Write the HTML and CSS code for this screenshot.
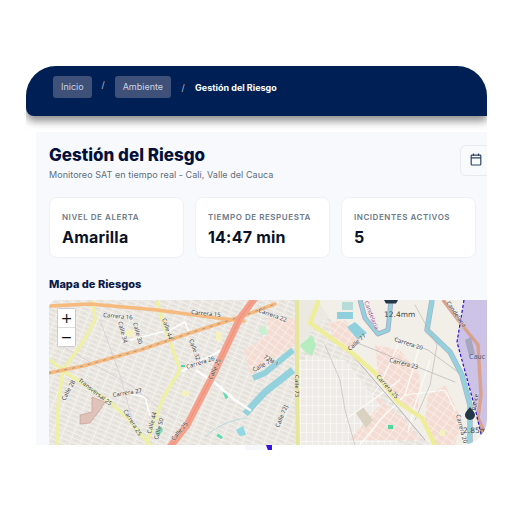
FILE: index.html
```html
<!DOCTYPE html>
<html lang="es">
<head>
<meta charset="utf-8">
<title>Gestión del Riesgo</title>
<meta name="viewport" content="width=device-width, initial-scale=1.0">
<link rel="stylesheet" href="styles.css">
</head>
<body>

<div class="frame">
  <nav class="topbar">
    <a class="crumb">Inicio</a>
    <span class="sep sep-high">/</span>
    <a class="crumb">Ambiente</a>
    <span class="sep">/</span>
    <span class="crumb-now">Gestión del Riesgo</span>
  </nav>

  <main class="panel">
    <div class="panel-head">
      <div>
        <h1 class="title">Gestión del Riesgo</h1>
        <p class="subtitle">Monitoreo SAT en tiempo real - Cali, Valle del Cauca</p>
      </div>
      <button class="date-btn" aria-label="Fecha">
        <svg width="12" height="13" viewBox="0 0 12 13" fill="none" stroke="#2c4560" stroke-width="1.2">
          <rect x="1.2" y="2.2" width="9.6" height="9.8" rx="0.8"/>
          <path d="M1.2 4.8h9.6M3.5 0.6v2.4M8.5 0.6v2.4"/>
        </svg>
      </button>
    </div>

    <div class="cards">
      <div class="card">
        <div class="card-label">Nivel de alerta</div>
        <div class="card-value">Amarilla</div>
      </div>
      <div class="card">
        <div class="card-label">Tiempo de respuesta</div>
        <div class="card-value">14:47 min</div>
      </div>
      <div class="card">
        <div class="card-label">Incidentes activos</div>
        <div class="card-value">5</div>
      </div>
    </div>

    <h2 class="map-title">Mapa de Riesgos</h2>

    <div class="map">
      <svg class="map-art" width="454" height="145" viewBox="49 300 454 145">
        <defs>
          <filter id="soft"><feGaussianBlur stdDeviation="0.35"/></filter>
          <pattern id="blocks-a" width="10" height="4.500" patternUnits="userSpaceOnUse" patternTransform="rotate(22)">
            <rect width="10" height="4.500" fill="#e8e4de"/>
            <path d="M0 0.4h10M0.4 0v4.500" stroke="#f7f5f2" stroke-width="0.8"/>
            <path d="M4 2.300h3" stroke="#dcd4d4" stroke-width="0.6"/>
          </pattern>
          <pattern id="blocks-b" width="6" height="9" patternUnits="userSpaceOnUse">
            <rect width="6" height="9" fill="#efecE7"/>
            <path d="M0.4 0v9M0 0.4h6" stroke="#fbfaf8" stroke-width="0.7"/>
          </pattern>
          <pattern id="blocks-pink" width="8" height="6" patternUnits="userSpaceOnUse" patternTransform="rotate(35)">
            <rect width="8" height="6" fill="#f4dcd3"/>
            <path d="M0 0.4h8M0.4 0v6" stroke="#f9f1ed" stroke-width="0.8"/>
          </pattern>
        </defs>

        <g filter="url(#soft)">
          <rect x="49" y="300" width="454" height="145" fill="url(#blocks-a)"/>
          <polygon points="298,300 345,300 312,330 300,345 298,445" fill="#ece8e2"/>
          <polygon points="298,360 345,360 400,445 298,445" fill="url(#blocks-b)"/>
          <polygon points="318,300 503,300 503,445 430,445 352,353" fill="#f2efe9"/>
          <polygon points="328,323 345,320 362,340 350,352 335,340" fill="url(#blocks-pink)"/>
          <polygon points="375,345 400,350 420,375 418,410 398,402 378,373" fill="url(#blocks-pink)"/>
          <polygon points="348,412 375,395 405,420 420,440 350,440" fill="url(#blocks-pink)"/>
          <polygon points="305,355 345,360 380,405 345,445 305,445" fill="url(#blocks-b)"/>
          <polygon points="244,350 268,335 268,362 250,376" fill="url(#blocks-pink)"/>
          <polygon points="268,318 295,318 295,345 268,362" fill="url(#blocks-pink)"/>
          <polygon points="428,395 445,385 462,420 455,445 436,445 425,420" fill="url(#blocks-pink)"/>

          <!-- parks -->
          <polygon points="300,345 312,335 316,345 312,356 305,352" fill="#b5edc0"/>
          <polygon points="259,328 265,326 268,333 261,336" fill="#c8f0d0"/>
          <polygon points="155,432 160,426 163,430 158,438" fill="#5fdcb0"/>
          <rect x="181" y="365" width="4" height="2" fill="#4fd8b0"/>
          <rect x="224" y="392" width="3" height="7" fill="#5fdcb0" transform="rotate(-20 225 395)"/>
          <rect x="217" y="435" width="6" height="3" fill="#5fdcb0" transform="rotate(35 220 436)"/>
          <rect x="388" y="425" width="5" height="4" fill="#4fd8a0"/>
          <rect x="125" y="330" width="9" height="7" fill="#f6f2c0"/>
          <rect x="216" y="332" width="6" height="9" fill="#f6f2c0"/>
          <rect x="182" y="391" width="7" height="5" fill="#f6f2c0"/>
          <rect x="440" y="430" width="5" height="6" fill="#f6f2c0"/>
          <polygon points="80,415 92,412 92,397 105,402 100,410 90,423 80,424" fill="#dfc3ba" stroke="#c8948a" stroke-width="0.6"/>
          <polygon points="355,412 363,407 373,420 366,428" fill="#d9d2c0"/>

          <!-- water -->
          <g fill="none" stroke-linejoin="round">
            <polyline points="360,300 365,318 378,334 388,330 391,300" stroke="#a9a6c4" stroke-width="5"/>
            <polyline points="360,300 365,318 378,334 388,330 391,300" stroke="#93d2dd" stroke-width="3.500"/>
            <polyline points="432,300 427,330 450,352 462,375 470,405 470,445" stroke="#a9b6c8" stroke-width="5.500"/>
            <polyline points="432,300 427,330 450,352 462,375 470,405 470,445" stroke="#93d2dd" stroke-width="4"/>
            <polyline points="253,378 265,373 293,350" stroke="#93d2dd" stroke-width="6"/>
            <polyline points="245,414 253,405 265,392 293,370" stroke="#93d2dd" stroke-width="7"/>
            <path d="M205 437 C218 425 232 420 246 418" stroke-width="0.8" stroke="#a9d8e0"/>
          </g>
          <polygon points="337,312 353,312 353,319 337,319" fill="#90d0de"/>
          <polygon points="347,327 355,322 367,333 358,340" fill="#90d0de"/>
          <polygon points="342,302 353,302 353,310 342,310" fill="#b5dcd8"/>
          <polygon points="236,430 243,426 246,435 240,436 237,432" fill="#8fd8e4"/>

          <!-- purple zone -->
          <polygon points="464,300 457,342 475,408 482,438 503,438 503,300" fill="#cdc3e6"/>
          <polyline points="443,300 462,325 478,345 481,395 478,418 486,436" fill="none" stroke="#d8a28e" stroke-width="3.500"/>
          <polygon points="465,340 471,337 475,354 469,356" fill="#a6a7bf"/>

          <!-- roads -->
          <g fill="none" stroke-linecap="round" stroke-linejoin="round">
            <polyline points="197,371 215,383 235,400 250,410" stroke="#fdfdfd" stroke-width="2.500"/>
            <polyline points="182,371 207,358 222,350" stroke="#fdfdfd" stroke-width="2.500"/>
            <polyline points="130,340 170,330 185,322 190,335" stroke="#fdfdfd" stroke-width="1.800"/>
            <polyline points="127,393 145,397 150,415" stroke="#fdfdfd" stroke-width="1.500"/>
            <polyline points="420,345 405,395 380,420 360,445" stroke="#fbfbf8" stroke-width="1.400"/>
            <polyline points="398,345 380,385 372,395" stroke="#fbfbf8" stroke-width="1.200"/>
            <polyline points="430,360 415,405 408,432" stroke="#fbfbf8" stroke-width="1.200"/>
            <polyline points="405,395 445,390 455,410" stroke="#fbfbf8" stroke-width="1.200"/>
            <polyline points="345,420 400,380" stroke="#fbfbf8" stroke-width="1.200"/>
            <polyline points="325,345 340,380 345,410 355,445" stroke="#c7c1c6" stroke-width="0.8"/>
            <polyline points="355,342 420,368 455,382" stroke="#a9a9a9" stroke-width="0.6"/>
            <polyline points="395,338 428,350 458,372" stroke="#a9a9a9" stroke-width="0.6"/>
            <polyline points="415,305 437,345 430,385 415,420" stroke="#b6b2ac" stroke-width="0.6"/>
            <polyline points="322,330 355,358 400,410 425,440" stroke="#b9b2ba" stroke-width="1"/>
            <polyline points="60,345 95,365 130,385 175,420" stroke="#d9ccd4" stroke-width="0.8"/>
            <polyline points="100,320 120,375 135,430" stroke="#d9ccd4" stroke-width="0.8"/>
            <polyline points="93,302 95,320 83,342 63,370 58,405 57,445" stroke="#eef0a6" stroke-width="3.500"/>
            <polyline points="49,359 65,372 110,402 127,418 150,445" stroke="#eef0a6" stroke-width="3.500"/>
            <polyline points="157,302 163,322 180,370 163,398 147,442" stroke="#eef0a6" stroke-width="3.500"/>
            <polyline points="297,300 297,395 298,445" stroke="#e6e69a" stroke-width="4"/>
            <polyline points="318,302 310,323 352,353 375,373 398,402 422,418 435,445" stroke="#eeee98" stroke-width="4.500"/>
            <polyline points="50,306 90,304 157,310 217,318 244,321" stroke="#f6b97e" stroke-width="3.500"/>
            <polyline points="49,373 83,366 140,350 190,333 240,317 275,304" stroke="#f6b97e" stroke-width="3.500"/>
            <polyline points="49,373 83,366 140,350 190,333 240,317 275,304" stroke="#7f8a95" stroke-width="0.7" stroke-dasharray="2 6"/>
            <polyline points="255,298 240,318 213,375 187,425 170,447" stroke="#f5a08a" stroke-width="7"/>
            <polyline points="255,298 240,318 213,375 187,425 170,447" stroke="#e88a78" stroke-width="0.8"/>
          </g>
        </g>

        <polyline points="464,300 457,342 475,408 482,438" fill="none" stroke="#2410d0" stroke-width="1.200" stroke-dasharray="3 2"/>

        <!-- street names -->
        <g class="street">
          <text transform="translate(103 317) rotate(5)">Carrera 16</text>
          <text transform="translate(118 322) rotate(75)">Calle 34</text>
          <text transform="translate(133 323) rotate(75)">Calle 30</text>
          <text transform="translate(162 319) rotate(72)">Calle 44</text>
          <text transform="translate(189 340) rotate(70)">Calle 32</text>
          <text transform="translate(187 369) rotate(-18)">Carrera 26</text>
          <text transform="translate(212 380) rotate(-66)">Calle 25</text>
          <text transform="translate(191 314) rotate(6)">Carrera 15</text>
          <text transform="translate(78 381) rotate(38)">Transversal 25</text>
          <text transform="translate(65 401) rotate(-62)">Calle 28</text>
          <text transform="translate(113 397) rotate(-9)">Carrera 27</text>
          <text transform="translate(123 411) rotate(58)">Carrera 25</text>
          <text transform="translate(151 434) rotate(-75)">Calle 44</text>
          <text transform="translate(158 440) rotate(-75)">Calle 50</text>
          <text transform="translate(174 441) rotate(-50)">Calle 25</text>
          <text transform="translate(254 372) rotate(-28)">Calle 72</text>
          <text transform="translate(258 312) rotate(20)">Carrera 22</text>
          <text transform="translate(263 358) rotate(30)">72H 1</text>
          <text transform="translate(295 375) rotate(90)">Calle 73</text>
          <text transform="translate(279 428) rotate(-68)">Calle 72J</text>
          <text transform="translate(350 351) rotate(-42)">Calle 77</text>
          <text transform="translate(394 341) rotate(18)">Carrera 20</text>
          <text transform="translate(389 362) rotate(14)">Carrera 23</text>
          <text transform="translate(376 377) rotate(48)">Carrera 25</text>
          <text transform="translate(456 415) rotate(75)">Carrera 20</text>
          <text transform="translate(446 303) rotate(55)">Candelaria</text>
          <text transform="translate(476 411) rotate(-82)">Pance</text>
          <text class="street-purple" transform="translate(364 302) rotate(68)">Candelaria</text>
          <text class="street-big" x="469" y="359">Cauc</text>
        </g>

        <!-- sensors -->
        <path d="M384 300h14l-2 3.500h-10z" fill="#243746"/>
        <text class="reading" x="384" y="317">12.4mm</text>
        <path d="M470 407 C472 410 475 412 475 415 A5 5 0 0 1 465 415 C465 412 468 410 470 407z" fill="#243746"/>
        <text class="reading" x="463" y="433">2.85m</text>
      </svg>

      <div class="zoom-box">
        <button class="zoom-btn">+</button>
        <button class="zoom-btn">−</button>
      </div>
    </div>
  </main>
</div>

<div class="tail">
  <div class="tail-pale"></div>
  <div class="tail-blue"></div>
</div>

</body>
</html>
```

FILE: styles.css
```css
* {box-sizing: border-box;}

body {
  margin: 0;
  background-color: #fff;
  font-family: Inter, "Liberation Sans", sans-serif;
}

.frame {
  width: 461px;
  height: 379px;
  margin: 66px 0 0 26px;
  background-color: #fff;
  border-radius: 30px 30px 26px 0;
  overflow: hidden;
}

.topbar {
  display: flex;
  align-items: center;
  height: 50px;
  padding: 0 27px 8px;
  background-color: #001f54;
  border-radius: 0 0 0 8px;
  box-shadow: 0 5px 8px rgba(0, 0, 0, 0.45);
  font-size: 9px;
  color: #fff;
}

.crumb {
  padding: 6px 8px;
  height: 22px;
  line-height: 10px;
  background-color: #3f5179;
  border-radius: 3px;
  color: #cdd4e0;
}

.sep {
  width: 24px;
  text-align: center;
  color: #b5bfd0;
}

.sep-high {
  width: 23px;
  padding-bottom: 6px;
}

.crumb-now {
  font-weight: 700;
}

.panel {
  width: 480px;
  height: 313px;
  margin: 16px 0 0 10px;
  padding: 13px 13px 0;
  background-color: #f7f9fc;
}

.panel-head {
  display: flex;
  justify-content: space-between;
  align-items: flex-start;
}

.title {
  margin: 0;
  font-size: 17px;
  line-height: 21px;
  font-weight: 800;
  color: #05103a;
}

.subtitle {
  margin: 2px 0 0;
  font-size: 9px;
  line-height: 13px;
  letter-spacing: 0.05px;
  color: #5f6e7e;
}

.date-btn {
  width: 43px;
  height: 31px;
  padding: 0 0 0 9px;
  text-align: left;
  background-color: #f9fafc;
  border: 1px solid #e7eaef;
  border-radius: 6px;
}

.cards {
  display: grid;
  grid-template-columns: 135px 135px 135px;
  gap: 11px;
  margin-top: 16px;
}

.card {
  height: 61px;
  padding: 14px 12px;
  background-color: #fff;
  border: 1px solid #edf0f4;
  border-radius: 8px;
}

.card-label {
  font-size: 8px;
  line-height: 11px;
  font-weight: 600;
  letter-spacing: 0.55px;
  text-transform: uppercase;
  color: #6c7a89;
}

.card-value {
  margin-top: 5px;
  font-size: 16px;
  line-height: 19px;
  font-weight: 700;
  letter-spacing: 0.2px;
  color: #0b1226;
}

.map-title {
  margin: 19px 0 8px;
  font-size: 11px;
  line-height: 15px;
  font-weight: 800;
  color: #0a1a4a;
}

.map {
  position: relative;
  width: 454px;
  height: 145px;
  border-radius: 8px 8px 0 0;
  overflow: hidden;
}

.map-art {
  display: block;
}

.street {
  font-family: "Noto Sans", sans-serif;
  font-size: 6px;
  fill: #3d3d3d;
  stroke: #fff;
  stroke-width: 1px;
  paint-order: stroke;
  stroke-opacity: 0.45;
}

.street-purple {
  fill: #9a4f92;
}

.street-big {
  font-size: 7px;
  fill: #555a6e;
  stroke: none;
}

.reading {
  font-family: "DejaVu Sans", sans-serif;
  font-size: 7.500px;
  fill: #4a4a4a;
}

/* leaflet style zoom control, sits over the map */
.zoom-box {
  position: absolute;
  left: 8px;
  top: 8px;
  display: flex;
  flex-direction: column;
  width: 19px;
  background-color: #fff;
  border: 1px solid #ccc;
  border-radius: 2px;
}

.zoom-btn {
  height: 18.500px;
  padding: 0;
  background-color: #fff;
  border: 0;
  border-bottom: 1px solid #ddd;
  font-family: "DejaVu Sans", sans-serif;
  font-size: 14px;
  line-height: 18px;
  color: #111;
}

.zoom-btn:last-child {
  border-bottom: 0;
}

.tail {
  display: flex;
  margin-left: 245px;
  height: 5px;
}

.tail-pale {
  width: 21px;
  background-color: #f5f7fb;
}

.tail-blue {
  width: 6px;
  background-color: #3a10e0;
  clip-path: polygon(0 0, 100% 0, 100% 100%, 30% 100%);
}
```
